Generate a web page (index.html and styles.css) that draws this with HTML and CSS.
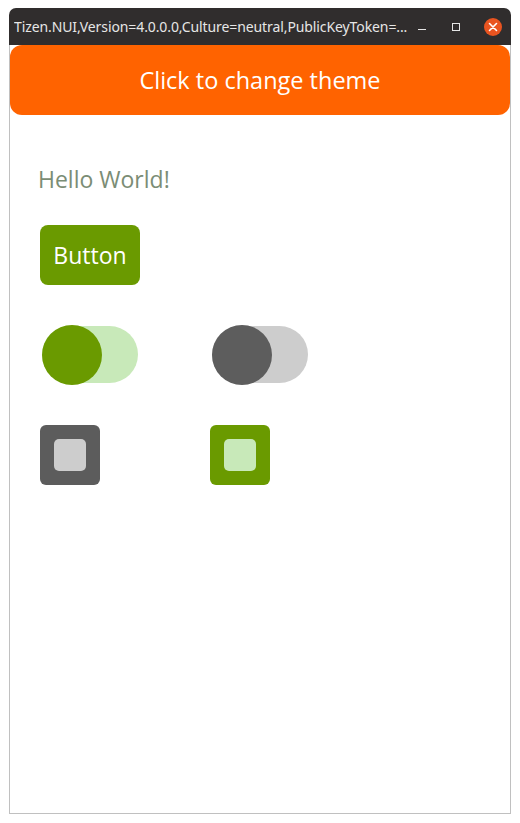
FILE: index.html
```html
<!DOCTYPE html>
<html>
<head>
<meta charset="utf-8">
<link rel="stylesheet" href="styles.css">
</head>
<body>
<div class="window">
  <div class="titlebar">
    <span class="title">Tizen.NUI,Version=4.0.0.0,Culture=neutral,PublicKeyToken=...</span>
    <div class="controls">
      <span class="ctl-min"></span>
      <span class="ctl-max"></span>
      <span class="ctl-close">
        <svg width="10" height="10" viewBox="0 0 10 10"><path d="M1.5 1.5 L8.5 8.5 M8.5 1.5 L1.5 8.5" stroke="#fff" stroke-width="1.6" stroke-linecap="round"/></svg>
      </span>
    </div>
  </div>
  <div class="content">
    <div class="theme-btn">Click to change theme</div>
    <div class="body">
      <div class="hello">Hello World!</div>
      <div class="btn">Button</div>
      <div class="row">
        <div class="switch on"><span class="track"></span><span class="thumb"></span></div>
        <div class="switch off"><span class="track"></span><span class="thumb"></span></div>
      </div>
      <div class="row checks">
        <div class="check off"><span class="inner"></span></div>
        <div class="check on"><span class="inner"></span></div>
      </div>
    </div>
  </div>
</div>
</body>
</html>
```
FILE: styles.css
```css
html, body {
  margin: 0;
  padding: 0;
  background: #ffffff;
}
body {
  font-family: "Open Sans", "DejaVu Sans", sans-serif;
}
.window {
  margin: 8px 0 0 9px;
  width: 502px;
}
.titlebar {
  height: 37px;
  background: #302d2d;
  border-radius: 7px 7px 0 0;
  display: flex;
  align-items: center;
  padding: 0 9px 0 5px;
  box-sizing: border-box;
}
.title {
  flex: 1;
  color: #e6e6e6;
  font-family: "Noto Sans", sans-serif;
  font-size: 14px;
  letter-spacing: -0.1px;
  white-space: nowrap;
  overflow: hidden;
}
.controls {
  display: flex;
  align-items: center;
}
.ctl-min {
  width: 8px;
  height: 1px;
  background: #e6e6e6;
  margin: 6px 0 0 0;
}
.ctl-max {
  width: 6px;
  height: 6px;
  border: 1px solid #e6e6e6;
  margin-left: 26px;
}
.ctl-close {
  width: 18px;
  height: 18px;
  border-radius: 50%;
  background: #e95420;
  margin-left: 24px;
  display: flex;
  align-items: center;
  justify-content: center;
}
.content {
  height: 769px;
  border: 1px solid #c0c0c0;
  border-top: none;
  box-sizing: border-box;
}
.theme-btn {
  height: 70px;
  background: #ff6300;
  border-radius: 12px;
  color: #ffffff;
  font-size: 23.5px;
  display: flex;
  align-items: center;
  justify-content: center;
}
.body {
  padding: 49px 0 0 28px;
  display: flex;
  flex-direction: column;
  align-items: flex-start;
}
.hello {
  color: #7b8d75;
  font-size: 23px;
  line-height: 30px;
}
.btn {
  margin: 31px 0 0 2px;
  width: 100px;
  height: 60px;
  background: #6a9a00;
  border-radius: 8px;
  color: #ffffff;
  font-size: 23px;
  display: flex;
  align-items: center;
  justify-content: center;
}
.row {
  display: flex;
  gap: 74px;
  margin: 40px 0 0 4px;
}
.switch {
  position: relative;
  width: 96px;
  height: 60px;
}
.switch .track {
  position: absolute;
  left: 0;
  top: 1px;
  width: 96px;
  height: 57px;
  border-radius: 29px;
}
.switch .thumb {
  position: absolute;
  left: 0;
  top: 0;
  width: 60px;
  height: 60px;
  border-radius: 50%;
}
.switch.on .track { background: #c8e9b9; }
.switch.on .thumb { background: #6a9a00; }
.switch.off .track { background: #cdcdcd; }
.switch.off .thumb { background: #5d5d5d; }
.checks {
  margin: 40px 0 0 2px;
  gap: 110px;
}
.check {
  width: 60px;
  height: 60px;
  border-radius: 6px;
  display: flex;
  align-items: center;
  justify-content: center;
}
.check .inner {
  width: 32px;
  height: 32px;
  border-radius: 5px;
}
.check.off { background: #5c5c5c; }
.check.off .inner { background: #cdcdcd; }
.check.on { background: #6a9a00; }
.check.on .inner { background: #c8e9b9; }
```
